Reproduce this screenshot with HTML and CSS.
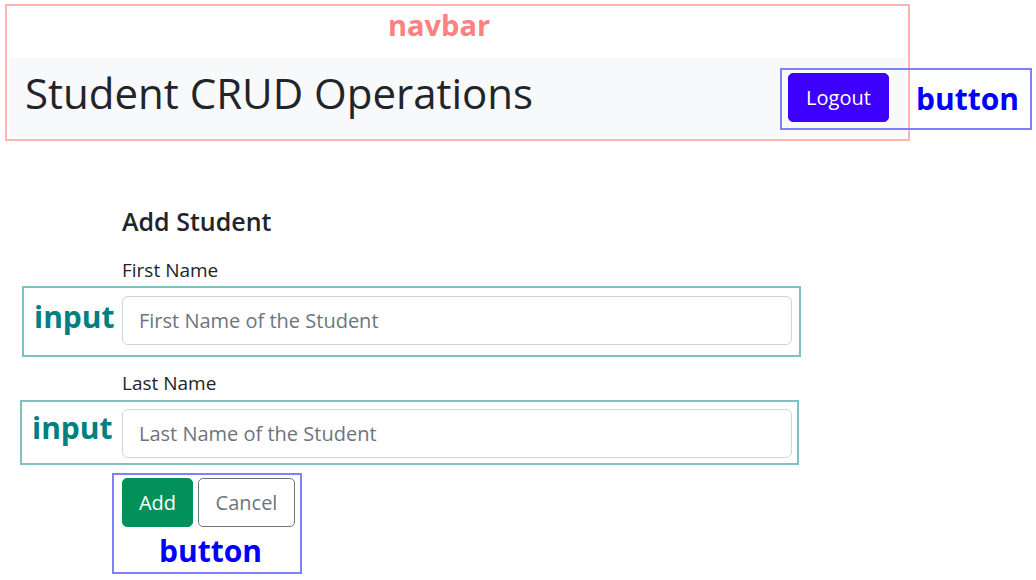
FILE: index.html
```html
<!DOCTYPE html>
<html>
<head>
<meta charset="utf-8">
<link rel="stylesheet" href="styles.css">
</head>
<body>
<div class="page">
  <header class="navbar">
    <h1 class="brand">Student CRUD Operations</h1>
    <button class="btn btn-logout">Logout</button>
  </header>

  <main class="content">
    <h2 class="form-title">Add Student</h2>
    <div class="field">
      <label class="field-label">First Name</label>
      <input class="field-input" type="text" placeholder="First Name of the Student">
    </div>
    <div class="field field-last">
      <label class="field-label">Last Name</label>
      <input class="field-input" type="text" placeholder="Last Name of the Student">
    </div>
    <div class="actions">
      <button class="btn btn-add">Add</button>
      <button class="btn btn-cancel">Cancel</button>
    </div>
  </main>

  <div class="ann ann-navbar"><span class="ann-label label-navbar">navbar</span></div>
  <div class="ann ann-logout"><span class="ann-label label-logout">button</span></div>
  <div class="ann ann-input1"><span class="ann-label label-input">input</span></div>
  <div class="ann ann-input2"><span class="ann-label label-input">input</span></div>
  <div class="ann ann-buttons"><span class="ann-label label-buttons">button</span></div>
</div>
</body>
</html>
```

FILE: styles.css
```css
* { box-sizing: border-box; }
html, body { margin: 0; padding: 0; background: #fff; }
body {
  font-family: "Open Sans", "Noto Sans", sans-serif;
  color: #212529;
  width: 1036px;
  height: 580px;
  overflow: hidden;
}
.page { position: relative; width: 1036px; height: 580px; padding-top: 58px; }

.navbar {
  margin: 0 0 0 9px;
  width: 896px;
  height: 79px;
  background: #f8f9fa;
  display: flex;
  align-items: center;
  justify-content: space-between;
  padding: 0 16px;
}
.brand {
  margin: 0;
  font-size: 42px;
  font-weight: 400;
  color: #212529;
  line-height: 50px;
  position: relative;
  top: -5px;
}
.btn {
  font-family: inherit;
  font-size: 20px;
  border-radius: 5px;
  height: 49px;
  cursor: pointer;
  line-height: 1;
  padding: 0;
}
.btn-logout {
  width: 101px;
  background: #3d00ff;
  color: #fff;
  border: 1px solid #3d00ff;
}

.content {
  margin: 70px 0 0 122px;
  width: 670px;
}
.form-title {
  margin: 0 0 24px;
  font-size: 25px;
  font-weight: 600;
  line-height: 28px;
}
.field { display: flex; flex-direction: column; margin-bottom: 27px; }
.field-last { margin-bottom: 20px; }
.field-label { font-size: 19px; line-height: 22px; margin-bottom: 15px; }
.field-input {
  height: 49px;
  width: 670px;
  border: 1px solid #ced4da;
  border-radius: 6px;
  padding: 0 16px;
  font-family: inherit;
  font-size: 20px;
  color: #212529;
}
.field-input::placeholder { color: #6c757d; }
.actions { display: flex; gap: 5px; }
.btn-add {
  width: 71px;
  background: #03915a;
  border: 1px solid #03915a;
  color: #fff;
}
.btn-cancel {
  width: 97px;
  background: #fff;
  border: 1px solid #6c757d;
  color: #6c757d;
}

.ann { position: absolute; border: 2px solid; pointer-events: none; }
.ann-label { position: absolute; font-family: "Open Sans", sans-serif; font-weight: 700; line-height: 1; white-space: nowrap; }
.ann-navbar { left: 5px; top: 4px; width: 905px; height: 137px; border-color: #ffb3b3; }
.label-navbar { color: #ff8080; font-size: 29px; left: 381px; top: 4px; }
.ann-logout { left: 780px; top: 68px; width: 252px; height: 62px; border-color: #8080ff; }
.label-logout { color: #0000ff; font-size: 30px; left: 134px; top: 14px; }
.ann-input1 { left: 22px; top: 286px; width: 779px; height: 71px; border-color: #80c0c0; }
.ann-input2 { left: 20px; top: 400px; width: 779px; height: 65px; border-color: #80c0c0; }
.label-input { color: #008080; font-size: 30px; left: 10px; top: 14px; }
.ann-input2 .label-input { top: 11px; }
.ann-buttons { left: 112px; top: 473px; width: 190px; height: 101px; border-color: #8080ff; }
.label-buttons { color: #0000ff; font-size: 30px; left: 45px; top: 61px; }
```
